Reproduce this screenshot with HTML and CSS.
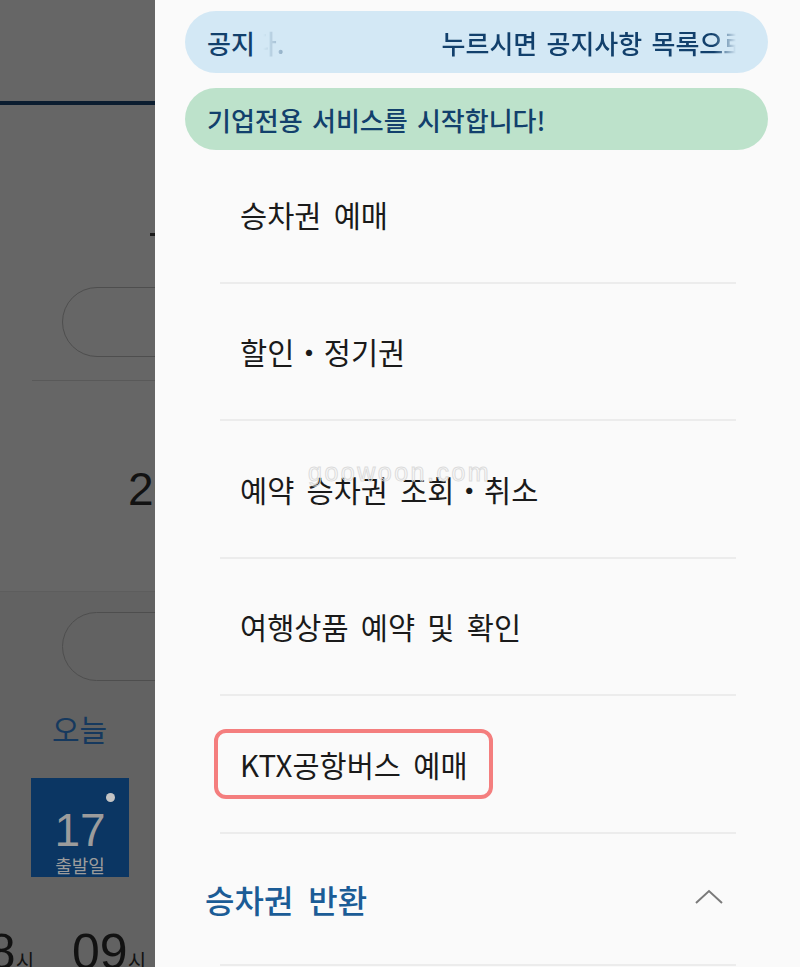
FILE: index.html
```html
<!DOCTYPE html>
<html lang="ko">
  <head>
    <meta charset="UTF-8" />
    <meta name="viewport" content="width=device-width, initial-scale=1.0" />
    <title>메뉴</title>
    <link rel="stylesheet" href="styles.css">
  </head>
  <body>
    <div class="screen">
      <!-- Dimmed page behind the drawer -->
      <div class="under">
        <div class="under-page">
          <div class="under-tabs"></div>
          <div class="under-title"><span class="dash"></span></div>
          <div class="under-pill"></div>
          <div class="under-rule"></div>
          <div class="under-date">2024.07.17</div>
          <div class="under-lower">
            <div class="under-pill"></div>
            <div class="under-today">오늘</div>
            <div class="under-day">
              <span class="dot"></span>
              <b>17</b>
              <span class="day-label">출발일</span>
            </div>
            <div class="under-hours">
              <span class="hour hour-cut">08<small>시</small></span>
              <span class="hour">09<small>시</small></span>
            </div>
          </div>
        </div>
      </div>

      <!-- Side menu -->
      <nav class="drawer">
        <div class="notice notice-blue">
          <span class="notice-label">공지</span>
          <div class="ticker">
            <div class="ticker-text">
              <span class="ticker-prev">다.</span>
              <span>누르시면 공지사항 목록으로 이동합니다.</span>
            </div>
          </div>
        </div>
        <div class="notice notice-green">기업전용 서비스를 시작합니다!</div>

        <ul class="menu">
          <li>승차권 예매</li>
          <li>할인<span class="mid">・</span>정기권</li>
          <li>예약 승차권 조회<span class="mid">・</span>취소</li>
          <li>여행상품 예약 및 확인</li>
          <li><span class="marked">KTX공항버스 예매</span></li>
        </ul>

        <div class="menu-section">
          <span class="section-title">승차권 반환</span>
          <svg class="chevron" width="28" height="16" viewBox="0 0 28 16">
            <polyline points="1,14 14,2 27,14" fill="none" stroke="#7a7a7a" stroke-width="2" />
          </svg>
        </div>

        <span class="watermark">goowoon.com</span>
      </nav>
    </div>
  </body>
</html>
```

FILE: styles.css
```css
body {
  margin: 0;
  font-family: "Noto Sans CJK KR", "Noto Sans", sans-serif;
}
.screen {
  display: flex;
  width: 800px;
  height: 967px;
  overflow: hidden;
}

/* dimmed page */
.under {
  width: 155px;
  flex: none;
  overflow: hidden;
  background-color: #666666;
}
.under-page {
  width: 420px;
}
.under-tabs {
  height: 101px;
  border-bottom: 4px solid #0b1d30;
}
.under-title {
  height: 155px;
  box-sizing: border-box;
  padding: 128px 0 0 150px;
}
.dash {
  display: block;
  width: 6px;
  height: 3px;
  background-color: #1a1a1a;
}
.under-pill {
  box-sizing: border-box;
  height: 70px;
  width: 360px;
  margin: 27px 0 0 62px;
  border: 1.5px solid #4e4e4e;
  border-radius: 36px;
}
.under-rule {
  margin: 23px 0 0 32px;
  border-top: 1px solid #595959;
}
.under-date {
  margin-top: 81px;
  padding-left: 128px;
  font-family: "Liberation Sans", sans-serif;
  font-size: 46px;
  line-height: 54px;
  color: #121212;
}
.under-lower {
  margin-top: 75px;
  border-top: 1px solid #5d5d5d;
  background-color: #626262;
  height: 400px;
}
.under-lower .under-pill {
  margin-top: 20px;
  height: 69px;
}
.under-today {
  margin-top: 28px;
  padding-left: 52px;
  font-size: 30px;
  line-height: 38px;
  color: #16395e;
}
.under-day {
  position: relative;
  box-sizing: border-box;
  margin: 31px 0 0 31px;
  width: 98px;
  height: 99px;
  padding-top: 28px;
  background-color: #0b3663;
  display: flex;
  flex-direction: column;
  align-items: center;
  color: #9c9c9c;
}
.under-day b {
  font-family: "Liberation Sans", sans-serif;
  font-weight: normal;
  font-size: 46px;
  line-height: 48px;
}
.day-label {
  font-size: 18px;
  line-height: 22px;
}
.dot {
  position: absolute;
  top: 15px;
  right: 14px;
  width: 9px;
  height: 9px;
  border-radius: 50%;
  background-color: #c4c4c4;
}
.under-hours {
  display: flex;
  gap: 38px;
  margin-top: 47px;
  font-family: "Liberation Sans", sans-serif;
  font-size: 50px;
  line-height: 56px;
  color: #121212;
}
.hour small {
  font-family: "Noto Sans CJK KR", sans-serif;
  font-size: 20px;
}
.hour-cut {
  margin-left: -40px;
}

/* drawer */
.drawer {
  position: relative;
  flex: 1;
  min-width: 0;
  background-color: #fafafa;
  padding-top: 11px;
}
.notice {
  display: flex;
  align-items: center;
  box-sizing: border-box;
  height: 62px;
  margin: 0 32px 0 30px;
  padding-left: 22px;
  border-radius: 31px;
  font-size: 26px;
  font-weight: 500;
  color: #12406c;
  white-space: nowrap;
  word-spacing: 2px;
}
.notice-blue {
  background-color: #d3e8f5;
}
.notice-green {
  margin-top: 15px;
  background-color: #bde2cb;
}
.notice-label {
  flex: none;
}
.ticker {
  flex: 1;
  min-width: 0;
  overflow: hidden;
  margin: 0 32px 0 8px;
  -webkit-mask-image: linear-gradient(to right, transparent 0, #000 60px, #000 calc(100% - 22px), transparent 100%);
  mask-image: linear-gradient(to right, transparent 0, #000 60px, #000 calc(100% - 22px), transparent 100%);
}
.ticker-text {
  display: flex;
  white-space: nowrap;
}
.ticker-prev {
  margin: 0 157px 0 -10px;
}

.menu {
  list-style: none;
  margin: -4px 64px 0 65px;
  padding: 0;
}
.menu li {
  display: flex;
  align-items: center;
  height: 135.5px;
  padding-left: 20px;
  border-bottom: 2px solid #ececec;
  font-size: 29.5px;
  color: #1a1a1a;
  word-spacing: 4px;
  white-space: nowrap;
}
.mid {
  display: inline-block;
  width: 1em;
  text-align: center;
}
.marked {
  display: inline-block;
  margin-left: -26px;
  padding: 11px 21px 11px 22px;
  line-height: 40px;
  border: 4px solid #f47e7e;
  border-radius: 12px;
}
.menu-section {
  display: flex;
  align-items: center;
  justify-content: space-between;
  height: 130px;
  margin: 0 64px 0 65px;
  border-bottom: 2px solid #ececec;
}
.section-title {
  margin-left: -15px;
  font-size: 32px;
  font-weight: 500;
  color: #1b5c96;
  word-spacing: 6px;
}
.chevron {
  margin-right: 13px;
  margin-top: -4px;
}
.watermark {
  position: absolute;
  left: 153px;
  top: 458px;
  font-family: "Liberation Sans", sans-serif;
  font-size: 25px;
  letter-spacing: 2.5px;
  color: transparent;
  -webkit-text-stroke: 1px #dcdcdc;
}
```
